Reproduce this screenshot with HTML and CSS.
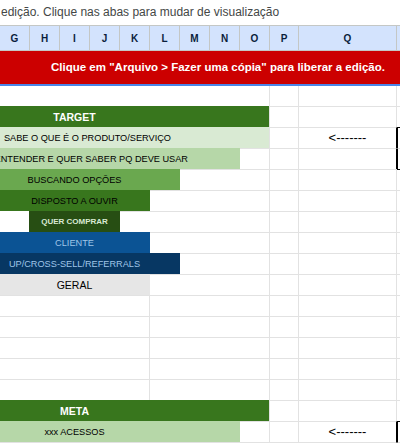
FILE: index.html
```html
<!DOCTYPE html>
<html lang="pt-BR">
<head>
<meta charset="utf-8">
<title>Funil</title>
<link rel="stylesheet" href="styles.css">
</head>
<body>
<div class="notice">edição. Clique nas abas para mudar de visualização</div>
<div class="colheads">
  <div class="ch">G</div><div class="ch">H</div><div class="ch">I</div><div class="ch">J</div><div class="ch">K</div><div class="ch">L</div><div class="ch">M</div><div class="ch">N</div><div class="ch">O</div>
  <div class="ch p">P</div><div class="ch q">Q</div><div class="ch r"></div>
</div>
<div class="banner">Clique em "Arquivo &gt; Fazer uma cópia" para liberar a edição.</div>
<div class="sheet">
  <div class="row first">
    <div class="main"><div class="rest"></div></div>
    <div class="cp"></div><div class="cq"></div><div class="cr"></div>
  </div>
  <div class="row">
    <div class="main"><div class="bar dark-green w269"><div class="label head">TARGET</div></div></div>
    <div class="cp"></div><div class="cq"></div><div class="cr"></div>
  </div>
  <div class="row">
    <div class="main"><div class="bar pale-green w269"><div class="label end170">SABE O QUE É O PRODUTO/SERVIÇO</div></div></div>
    <div class="cp"></div><div class="cq blk"><span class="arrow">&lt;-------</span></div><div class="cr box-top"></div>
  </div>
  <div class="row">
    <div class="main"><div class="bar light-green w240"><div class="label end187">ENTENDER E QUER SABER PQ DEVE USAR</div></div><div class="rest"></div></div>
    <div class="cp"></div><div class="cq blk"></div><div class="cr box-mid"></div>
  </div>
  <div class="row">
    <div class="main"><div class="bar mid-green w180"><div class="label">BUSCANDO OPÇÕES</div></div><div class="rest"></div></div>
    <div class="cp"></div><div class="cq"></div><div class="cr box-end"></div>
  </div>
  <div class="row">
    <div class="main"><div class="bar dark-green w150"><div class="label">DISPOSTO A OUVIR</div></div><div class="rest"></div></div>
    <div class="cp"></div><div class="cq"></div><div class="cr"></div>
  </div>
  <div class="row">
    <div class="main"><div class="indent"></div><div class="bar deep-green w91"><div class="label full buy">QUER COMPRAR</div></div><div class="rest"></div></div>
    <div class="cp"></div><div class="cq"></div><div class="cr"></div>
  </div>
  <div class="row">
    <div class="main"><div class="bar blue w150"><div class="label client">CLIENTE</div></div><div class="rest"></div></div>
    <div class="cp"></div><div class="cq"></div><div class="cr"></div>
  </div>
  <div class="row">
    <div class="main"><div class="bar navy w180"><div class="label client">UP/CROSS-SELL/REFERRALS</div></div><div class="rest"></div></div>
    <div class="cp"></div><div class="cq"></div><div class="cr"></div>
  </div>
  <div class="row">
    <div class="main"><div class="bar gray w150"><div class="label geral">GERAL</div></div><div class="rest"></div></div>
    <div class="cp"></div><div class="cq"></div><div class="cr"></div>
  </div>
  <div class="row">
    <div class="main"><div class="half"></div><div class="rest"></div></div>
    <div class="cp"></div><div class="cq"></div><div class="cr"></div>
  </div>
  <div class="row">
    <div class="main"><div class="half"></div><div class="rest"></div></div>
    <div class="cp"></div><div class="cq"></div><div class="cr"></div>
  </div>
  <div class="row">
    <div class="main"><div class="half"></div><div class="rest"></div></div>
    <div class="cp"></div><div class="cq"></div><div class="cr"></div>
  </div>
  <div class="row">
    <div class="main"><div class="half"></div><div class="rest"></div></div>
    <div class="cp"></div><div class="cq"></div><div class="cr"></div>
  </div>
  <div class="row">
    <div class="main"><div class="half"></div><div class="rest"></div></div>
    <div class="cp"></div><div class="cq"></div><div class="cr"></div>
  </div>
  <div class="row">
    <div class="main"><div class="bar dark-green w269"><div class="label head">META</div></div></div>
    <div class="cp"></div><div class="cq"></div><div class="cr"></div>
  </div>
  <div class="row">
    <div class="main"><div class="bar light-green w240"><div class="label small">xxx ACESSOS</div></div><div class="rest"></div></div>
    <div class="cp"></div><div class="cq blk"><span class="arrow">&lt;-------</span></div><div class="cr box-top"></div>
  </div>
  <div class="row">
    <div class="main"><div class="rest"></div></div>
    <div class="cp"></div><div class="cq blk"></div><div class="cr box-mid"></div>
  </div>
</div>
</body>
</html>
```

FILE: styles.css
```css
html, body {
  margin: 0;
  padding: 0;
  background: #ffffff;
}
body {
  width: 400px;
  height: 443px;
  overflow: hidden;
  font-family: "Liberation Sans", Arial, sans-serif;
}

.notice {
  height: 25px;
  box-sizing: border-box;
  padding: 5px 0 0 1px;
  font-size: 12px;
  line-height: 14px;
  color: #444746;
  white-space: nowrap;
}

.colheads {
  display: flex;
  height: 24px;
  background: #d3e3fd;
  border-top: 1px solid #c4c7c5;
  border-bottom: 1px solid #c4c7c5;
}
.ch {
  width: 30px;
  flex: none;
  box-sizing: border-box;
  border-right: 1px solid #c4c7c5;
  display: flex;
  align-items: center;
  justify-content: center;
  font-size: 10px;
  font-weight: bold;
  color: #0b1e3c;
}
.ch.p { width: 29px; }
.ch.q { width: 98px; }
.ch.r { flex: 1; border-right: none; }

.banner {
  height: 33px;
  background: #cc0000;
  border-bottom: 2px solid #4a86e8;
  color: #ffffff;
  font-weight: bold;
  font-size: 11.5px;
  line-height: 33px;
  padding-left: 51px;
  white-space: nowrap;
}

.row {
  display: flex;
  height: 21px;
}
.row.first {
  height: 20px;
}
.row.first .main,
.row.first .rest,
.row.first .cp,
.row.first .cq,
.row.first .cr {
  border-top: none;
}

.main {
  width: 270px;
  flex: none;
  display: flex;
  box-sizing: border-box;
  border-right: 1px solid #e2e2e2;
}
.rest {
  flex: 1;
  border-top: 1px solid #e2e2e2;
}
.half {
  width: 150px;
  flex: none;
  box-sizing: border-box;
  border-top: 1px solid #e2e2e2;
  border-right: 1px solid #e2e2e2;
}
.indent {
  width: 29px;
  flex: none;
}

.cp, .cq, .cr {
  box-sizing: border-box;
  border-top: 1px solid #e2e2e2;
}
.cp {
  width: 29px;
  flex: none;
  border-right: 1px solid #e2e2e2;
}
.cq {
  width: 98px;
  flex: none;
  border-right: 1px solid #e2e2e2;
  display: flex;
  align-items: center;
  justify-content: center;
}
.cr {
  flex: 1;
}
.cq.blk { border-right-color: #000000; }
.cr.box-top { border-top-color: #000000; border-left: 1px solid #000000; }
.cr.box-mid { border-left: 1px solid #000000; }
.cr.box-end { border-top-color: #000000; }

.arrow {
  font-size: 13px;
  line-height: 14px;
  color: #000000;
  white-space: nowrap;
}

.bar {
  flex: none;
  height: 21px;
  display: flex;
}
.w269 { width: 269px; }
.w240 { width: 240px; }
.w180 { width: 180px; }
.w150 { width: 150px; }
.w91 { width: 91px; }

.dark-green { background: #38761d; }
.pale-green { background: #d9ead3; }
.light-green { background: #b6d7a8; }
.mid-green { background: #6aa84f; }
.deep-green { background: #274e13; }
.blue { background: #0b5394; }
.navy { background: #073763; }
.gray { background: #e6e6e6; }

.label {
  width: 149px;
  flex: none;
  display: flex;
  align-items: center;
  justify-content: center;
  white-space: nowrap;
  font-size: 9.2px;
  color: #000000;
}
.label.end170 {
  width: 171px;
  justify-content: flex-end;
}
.label.end187 {
  width: 188px;
  justify-content: flex-end;
}
.label.full { width: 100%; }
.label.head {
  font-size: 10.5px;
  font-weight: bold;
  color: #ffffff;
}
.label.buy {
  font-size: 8px;
  font-weight: bold;
  color: #d9ead3;
}
.label.client {
  color: #9fc5e8;
}
.label.geral {
  font-size: 10.5px;
}
.label.small {
  font-size: 9.2px;
}
```
